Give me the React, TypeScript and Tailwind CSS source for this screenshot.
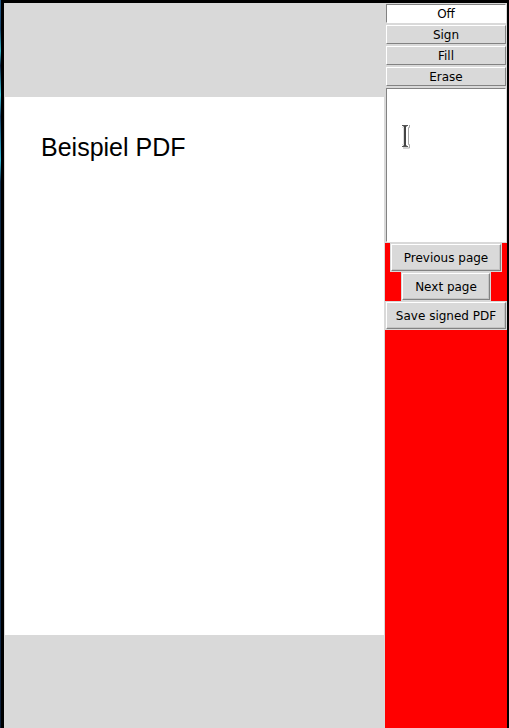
import { useState } from "react";

const modes = ["Off", "Sign", "Fill", "Erase"];

const raised = "border-t-white border-l-white border-b-[#828282] border-r-[#828282] bg-[#d9d9d9]";
const sunken = "border-t-[#828282] border-l-[#828282] border-b-white border-r-white bg-white";

function PushButton({ label, padding = "px-3" }: { label: string; padding?: string }) {
  return (
    <div className="bg-[#d9d9d9] p-px">
      <button
        type="button"
        className={`block h-[27px] border text-center leading-[27px] whitespace-nowrap shadow-[inset_-1px_-1px_0_#c3c3c3] ${padding} ${raised}`}
      >
        {label}
      </button>
    </div>
  );
}

function TextCursor() {
  return (
    <svg
      className="pointer-events-none absolute top-[37px] left-[15px]"
      width="12"
      height="26"
      viewBox="0 0 12 26"
      aria-hidden="true"
    >
      <path d="M9.5 1v2.5H8.5v17h1v3.5H3" fill="none" stroke="#a8a8a8" strokeWidth="1" />
      <path d="M2 3.5h1.5v17H2" fill="none" stroke="#dcdcdc" strokeWidth="1" />
      <path d="M2 1.5h6M2 22.5h6" stroke="#555" strokeWidth="1" />
      <path d="M3 2.5h4M3 21.5h4" stroke="#999" strokeWidth="1" />
      <path d="M5 2v20" stroke="#444" strokeWidth="2" />
    </svg>
  );
}

export default function App() {
  const [mode, setMode] = useState("Off");

  return (
    <div className="flex min-h-screen bg-black font-['DejaVu_Sans',sans-serif] text-xs text-black">
      <div className="w-px bg-[linear-gradient(to_bottom,#245b8c_0%,#17436a_4%,#37b6cc_7%,#0b2445_9%,#41cbe2_13%,#173f68_16%,#32bada_22%,#0c294a_25%,#081d35_50%,#102d50_80%,#0b1d38_100%)]" />
      <div className="flex grow pt-[3px] pr-[2px] pl-[3px]">
        <main className="flex grow flex-col justify-center bg-[#d9d9d9] px-px">
          <article className="aspect-[379/538] w-full bg-white px-9 pt-9">
            <h1 className="font-['Liberation_Sans',sans-serif] text-[25px] leading-7">Beispiel PDF</h1>
          </article>
        </main>
        <aside className="flex w-[122px] shrink-0 flex-col items-center bg-[#ff0000]">
          <fieldset className="w-full bg-[#d9d9d9]">
            {modes.map((name) => (
              <label key={name} className="block p-px">
                <span
                  className={`flex h-[19px] justify-center border leading-[19px] ${
                    mode === name ? sunken : raised
                  }`}
                >
                  <input
                    type="radio"
                    name="mode"
                    value={name}
                    checked={mode === name}
                    onChange={() => setMode(name)}
                    className="size-0 appearance-none"
                  />
                  {name}
                </span>
              </label>
            ))}
          </fieldset>
          <div className="relative w-full bg-[#d9d9d9] p-px">
            <textarea
              aria-label="Text to fill in"
              className={`block h-[154px] w-full resize-none border p-1 outline-none ${sunken}`}
            />
            <TextCursor />
          </div>
          <PushButton label="Previous page" />
          <PushButton label="Next page" />
          <PushButton label="Save signed PDF" padding="px-[9px]" />
        </aside>
      </div>
    </div>
  );
}
